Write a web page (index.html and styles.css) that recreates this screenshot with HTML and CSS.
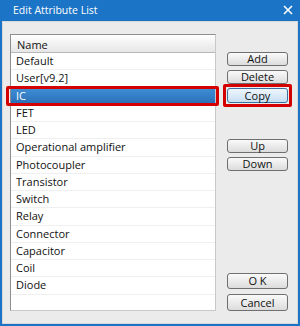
FILE: index.html
```html
<!DOCTYPE html>
<html lang="en">
<head>
    <meta charset="UTF-8">
    <title>Edit Attribute List</title>
    <link rel="stylesheet" href="styles.css">
</head>
<body>
    <div class="window">
        <div class="titlebar">
            <span class="title">Edit Attribute List</span>
            <svg class="close" width="10" height="10" viewBox="0 0 10 10">
                <path d="M1 1L9 9M9 1L1 9" stroke="#fff" stroke-width="1.6"/>
            </svg>
        </div>
        <div class="client">
            <div class="list">
                <div class="list-header">Name</div>
                <div class="row">Default</div>
                <div class="row">User[v9.2]</div>
                <div class="row selected">IC<span class="mark"></span></div>
                <div class="row">FET</div>
                <div class="row">LED</div>
                <div class="row">Operational amplifier</div>
                <div class="row">Photocoupler</div>
                <div class="row">Transistor</div>
                <div class="row">Switch</div>
                <div class="row">Relay</div>
                <div class="row">Connector</div>
                <div class="row">Capacitor</div>
                <div class="row">Coil</div>
                <div class="row">Diode</div>
            </div>
            <div class="buttons">
                <button class="btn first">Add</button>
                <button class="btn">Delete</button>
                <button class="btn focused">Copy<span class="mark"></span></button>
                <button class="btn up">Up</button>
                <button class="btn">Down</button>
                <button class="btn ok">O K</button>
                <button class="btn cancel">Cancel</button>
            </div>
        </div>
    </div>
</body>
</html>
```

FILE: styles.css
```css
* {
    margin: 0;
    padding: 0;
    box-sizing: border-box;
    font-family: "Open Sans", "DejaVu Sans", sans-serif;
}

body {
    background: #fff;
}

.window {
    width: 300px;
    height: 326px;
    background: #1c74c6;
    padding: 0 2px 2px;
    display: flex;
    flex-direction: column;
}

.titlebar {
    height: 21px;
    display: flex;
    align-items: center;
    justify-content: space-between;
    padding: 0 5px 1px 11px;
}

.title {
    color: #fff;
    font-size: 10.5px;
}

.client {
    flex: 1;
    background: #ebebeb;
    border: 1px solid #d8d8d8;
    padding: 12px 9px 12px 7px;
    display: flex;
}

.list {
    width: 206px;
    background: #fff;
    border: 1px solid #8e8e8e;
    border-right-color: #c8c8c8;
    border-bottom-color: #c8c8c8;
}

.list-header {
    height: 18px;
    line-height: 17px;
    font-size: 11px;
    color: #111;
    padding-left: 6px;
    background: linear-gradient(#fdfdfd, #e6e6e6);
    border-bottom: 1px solid #b8b8b8;
    border-top: 1px solid #fff;
}

.row {
    position: relative;
    height: 17.25px;
    line-height: 16px;
    font-size: 11px;
    color: #111;
    padding-left: 5px;
    border-bottom: 1px solid #efefef;
}

.row.selected {
    color: #fff;
    background: linear-gradient(#3f8fd6, #2a6fb8);
    border-bottom-color: #1f5c9e;
}

.mark {
    position: absolute;
    border: 3px solid #d40000;
    border-radius: 2px;
}

.row .mark {
    left: -5px;
    right: -4px;
    top: -2px;
    bottom: -2px;
}

.buttons {
    margin-left: 11px;
    width: 61px;
    display: flex;
    flex-direction: column;
}

.btn {
    position: relative;
    height: 14px;
    margin-top: 4px;
    font-size: 11px;
    line-height: 12px;
    color: #111;
    background: linear-gradient(#fafafa, #dcdcdc);
    border: 1px solid #6f6f6f;
    border-radius: 3px;
}

.btn.first {
    margin-top: 18px;
}

.btn.focused {
    height: 15px;
    background: linear-gradient(#eef6fd, #c9dff2);
    border-color: #3c6f9e;
}

.btn .mark {
    left: -5px;
    right: -5px;
    top: -5px;
    bottom: -5px;
}

.btn.up {
    margin-top: 36px;
}

.btn.ok {
    margin-top: auto;
    height: 16px;
}

.btn.cancel {
    margin-top: 5px;
    height: 17px;
}
```
